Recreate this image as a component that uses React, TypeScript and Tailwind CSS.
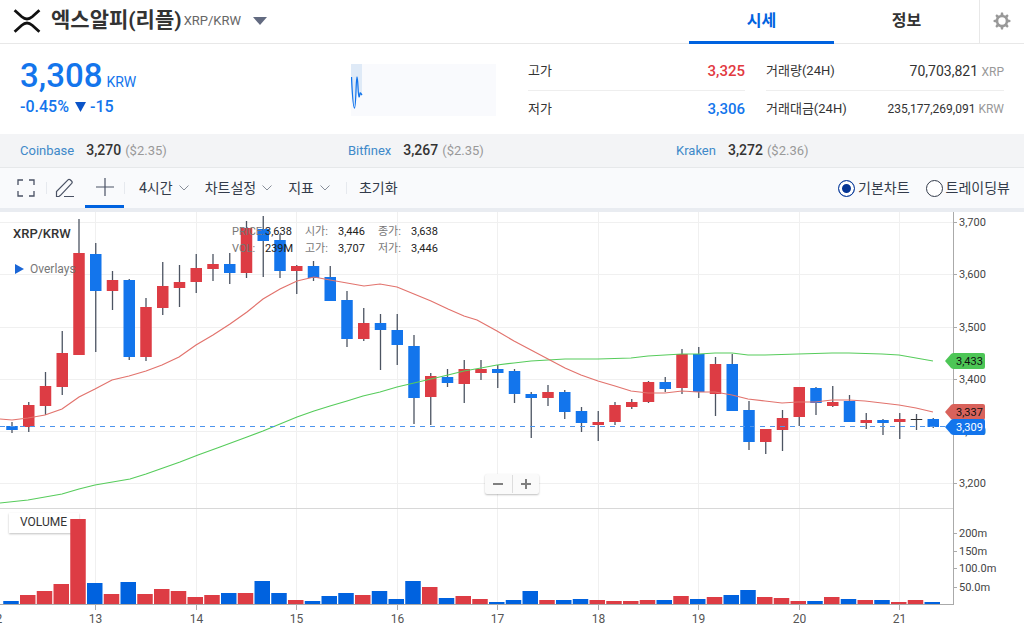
import { useState } from "react";
import { cx } from "class-variance-authority";

type Candle = {
  high: number;
  top: number;
  bottom: number;
  low: number;
  color: "r" | "b" | "k";
  volume: number;
};

const RED = "#dd3c44";
const BLUE = "#1375ec";
const FONT = "font-[Roboto,'Noto_Sans_CJK_KR',sans-serif]";

const row = (
  color: Candle["color"],
  high: number,
  top: number,
  bottom: number,
  low: number,
  volume: number
): Candle => ({ color, high, top, bottom, low, volume });

// One entry per 4 hours, in plot units
const CANDLES: Candle[] = [
  row("b", 422, 426, 430, 433, 3),
  row("r", 402, 405, 427, 432, 9),
  row("r", 372, 386, 406, 415, 13),
  row("r", 331, 353, 387, 395, 20),
  row("r", 219, 253, 355, 355, 85),
  row("b", 243, 254, 291, 352, 21),
  row("r", 271, 280, 291, 310, 10),
  row("b", 279, 280, 357, 360, 22),
  row("r", 298, 307, 357, 361, 10),
  row("r", 262, 286, 308, 315, 15),
  row("r", 265, 282, 288, 307, 13),
  row("r", 254, 268, 282, 293, 7),
  row("r", 254, 264, 269, 281, 9),
  row("b", 253, 264, 273, 284, 11),
  row("r", 221, 228, 273, 278, 11),
  row("b", 216, 229, 241, 277, 23),
  row("b", 234, 240, 271, 278, 11),
  row("r", 265, 266, 271, 294, 4),
  row("b", 261, 266, 278, 281, 3),
  row("b", 266, 277, 301, 301, 8),
  row("b", 291, 300, 339, 347, 11),
  row("r", 308, 323, 339, 341, 9),
  row("b", 314, 323, 330, 370, 13),
  row("b", 314, 330, 345, 365, 5),
  row("b", 335, 346, 398, 424, 23),
  row("r", 373, 376, 397, 425, 17),
  row("b", 369, 377, 383, 387, 6),
  row("r", 360, 369, 384, 403, 8),
  row("r", 360, 369, 373, 380, 5),
  row("b", 365, 369, 373, 388, 2),
  row("b", 369, 371, 394, 403, 4),
  row("b", 392, 394, 398, 438, 13),
  row("r", 385, 392, 398, 406, 4),
  row("b", 390, 392, 412, 419, 4),
  row("b", 407, 411, 423, 432, 5),
  row("r", 411, 422, 425, 441, 4),
  row("r", 402, 405, 422, 425, 3),
  row("r", 399, 402, 407, 409, 3),
  row("r", 381, 382, 402, 403, 4),
  row("b", 377, 382, 389, 392, 4),
  row("r", 349, 354, 388, 394, 8),
  row("b", 347, 354, 392, 398, 5),
  row("r", 357, 364, 394, 416, 7),
  row("b", 354, 364, 411, 411, 9),
  row("b", 401, 410, 442, 450, 14),
  row("r", 429, 429, 442, 454, 7),
  row("r", 410, 418, 430, 451, 6),
  row("r", 387, 387, 417, 426, 3),
  row("b", 387, 388, 403, 415, 3),
  row("r", 386, 402, 406, 407, 7),
  row("b", 395, 401, 422, 422, 5),
  row("r", 413, 420, 423, 429, 4),
  row("b", 419, 420, 423, 435, 4),
  row("r", 413, 419, 422, 439, 2),
  row("k", 414, 419, 420, 430, 4),
  row("b", 418, 419, 427, 428, 2),
];

const MA_SHORT =
  "0,419 12,420 28,418 45,415 62,409 79,397 95,389 112,380 129,376 146,371 162,365 179,357 196,345 213,335 230,324 247,312 263,299 280,289 297,281 314,277 330,280 347,283 364,286 380,284 397,287 414,294 431,301 448,309 464,316 477,320 497,331 514,341 531,350 548,359 565,368 581,375 598,381 615,386 631,391 648,393 665,393 682,391 698,392 715,392 732,395 748,399 765,401 782,403 798,402 815,402 832,400 849,400 865,401 882,403 899,405 916,408 933,412";
const MA_LONG =
  "0,503 28,500 62,494 79,489 95,485 130,479 146,474 163,468 180,462 198,455 220,447 247,437 263,431 280,424 297,417 314,411 330,406 347,401 363,396 380,392 397,387 414,383 431,379 448,375 464,371 481,368 497,365 514,363 531,361 548,360 565,359 598,359 631,358 648,356 682,354 699,354 715,353 732,353 748,355 765,355 798,354 832,353 849,353 882,354 899,355 916,358 933,361";

const PRICE_TICKS = [
  { label: "3,700", y: 222 },
  { label: "3,600", y: 274 },
  { label: "3,500", y: 327 },
  { label: "3,400", y: 379 },
  { label: "3,300", y: 431 },
  { label: "3,200", y: 483 },
];
const VOLUME_TICKS = [
  { label: "200m", y: 533 },
  { label: "150m", y: 551 },
  { label: "100.0m", y: 568 },
  { label: "50.0m", y: 587 },
];
const DAYS = [12, 13, 14, 15, 16, 17, 18, 19, 20, 21];

const EXCHANGES = [
  { name: "Coinbase", price: "3,270", usd: "($2.35)" },
  { name: "Bitfinex", price: "3,267", usd: "($2.35)" },
  { name: "Kraken", price: "3,272", usd: "($2.36)" },
];

const candleX = (i: number) => 12 + i * 16.75;
const dayX = (day: number) => Math.round(96 + (day - 13) * 100.5) - 0.5;

const XrpLogo = () => (
  <svg viewBox="0 0 28 24" className="h-6 w-7" fill="none" stroke="#111" strokeWidth="2.8">
    <path d="M1.6 1.2 8.8 7.8Q14 12.2 19.2 7.8L26.4 1.2" />
    <path d="M1.6 22.8 8.8 16.2Q14 11.8 19.2 16.2L26.4 22.8" />
  </svg>
);

const GearIcon = () => (
  <svg viewBox="0 0 18 18" className="size-[18px]" fill="none" stroke="#999">
    <circle cx="9" cy="9" r="5" strokeWidth="2.6" />
    {[0, 45, 90, 135, 180, 225, 270, 315].map((angle) => (
      <path
        key={angle}
        d="M7.4 3.4 8 .6h2l.6 2.8z"
        fill="#999"
        stroke="none"
        transform={`rotate(${angle} 9 9)`}
      />
    ))}
  </svg>
);

const Caret = () => (
  <svg viewBox="0 0 10 6" className="h-1.5 w-2.5" fill="none" stroke="#888e99">
    <path d="M.5.5 5 5 9.5.5" />
  </svg>
);

const Divider = () => <span className="h-3 w-px bg-[#e6e9ee]" />;

const Header = () => {
  const [tab, setTab] = useState("시세");

  return (
    <header className="flex h-11 border-b border-[#e8e8e8]">
      <div className="flex flex-1 items-center pb-0.5 pl-[13px]">
        <XrpLogo />
        <h1 className="ml-2.5 text-[21px] font-bold text-[#333]">엑스알피(리플)</h1>
        <span className="ml-0.5 text-[13px] text-[#666]">XRP/KRW</span>
        <button type="button" aria-label="코인 선택" className="ml-3">
          <svg viewBox="0 0 14 8" className="h-2 w-3.5" fill="#626a80">
            <path d="M0 0h14L7 8z" />
          </svg>
        </button>
      </div>
      <nav className="flex">
        {["시세", "정보"].map((name) => (
          <button
            key={name}
            type="button"
            onClick={() => setTab(name)}
            className={cx(
              "h-11 w-[145px] border-b-3 text-[16px] font-bold",
              tab === name
                ? "border-[#0062df] text-[#0062df]"
                : "border-transparent text-[#333]"
            )}
          >
            {name}
          </button>
        ))}
      </nav>
      <button
        type="button"
        aria-label="설정"
        className="flex w-[45px] items-center justify-center border-l border-[#e8e8e8] pb-0.5"
      >
        <GearIcon />
      </button>
    </header>
  );
};

const Summary = () => (
  <section className="flex h-[90px] items-start px-5">
    <div className="flex-1 pt-3 font-medium text-[#1375ec]">
      <p className="flex h-10 items-baseline gap-1 leading-10">
        <strong className="text-[33px] font-medium">3,308</strong>
        <span className="text-[14px] font-normal">KRW</span>
      </p>
      <p className="flex items-center gap-1.5 text-[16px] leading-[22px]">
        -0.45%
        <svg viewBox="0 0 11 10" className="h-2.5 w-[11px]" fill="#0b54c8">
          <path d="M0 0h11L5.500 10z" />
        </svg>
        <span className="-ml-0.5">-15</span>
      </p>
    </div>
    <div className="mt-5 w-[145px] bg-[#f9fafd]">
      <svg viewBox="0 0 145 52" className="h-[52px] w-full" fill="none">
        <path d="M0 0h11v32l-2-3-2 5-1-21-2 20-1 11-2-11-1-20z" fill="#dfeaf7" />
        <path
          d="M.5 13C1 24 2 44 3.500 44S5 13 6 13s1 20 2 20 .6-5 1.500-4l1.500 2"
          stroke="#1375ec"
          strokeWidth="1.300"
        />
      </svg>
    </div>
    <dl className="ml-8 mt-2 w-[217px] text-[13px] text-[#333]">
      <div className="flex h-[39px] items-center justify-between border-b border-[#eee]">
        <dt>고가</dt>
        <dd className="text-[15px] font-medium text-[#e2393f]">3,325</dd>
      </div>
      <div className="flex h-9 items-center justify-between">
        <dt>저가</dt>
        <dd className="text-[15px] font-medium text-[#1375ec]">3,306</dd>
      </div>
    </dl>
    <dl className="ml-[21px] mt-2 w-[238px] text-[13px] text-[#333]">
      <div className="flex h-[39px] items-center justify-between border-b border-[#eee]">
        <dt>거래량(24H)</dt>
        <dd className="text-[14px]">
          70,703,821 <span className="text-[12px] text-[#999]">XRP</span>
        </dd>
      </div>
      <div className="flex h-9 items-center justify-between">
        <dt>거래대금(24H)</dt>
        <dd className="text-[12px]">
          235,177,269,091 <span className="text-[#999]">KRW</span>
        </dd>
      </div>
    </dl>
  </section>
);

const Toolbar = () => {
  const [chart, setChart] = useState("기본차트");

  return (
    <div className="flex h-11 items-start justify-between border-b-4 border-[#e9ecf1] bg-[#f9fafc] text-[14px] text-[#333b4a]">
      <div className="flex h-10 items-center">
        <button
          type="button"
          aria-label="전체화면"
          className="flex h-10 w-[46px] items-center justify-end pr-[11px]"
        >
          <svg viewBox="0 0 18 18" className="size-[18px]" fill="none" stroke="#4a5264" strokeWidth="1.300">
            <path d="M1 6V1h5M12 1h5v5M17 12v5h-5M6 17H1v-5" />
          </svg>
        </button>
        <Divider />
        <button type="button" aria-label="그리기" className="flex h-10 w-[38px] items-center justify-center pr-0.5">
          <svg viewBox="0 0 20 20" className="size-5" fill="none" stroke="#4a5264" strokeWidth="1.200">
            <path d="M1.500 18.500v-5L13 1.800q1-1 2.200 0l1.500 1.400q1 1 0 2.200L5.500 17.300 4 18.500zM9 18.500h10" />
          </svg>
        </button>
        <button
          type="button"
          aria-label="십자선"
          className="flex h-10 w-[39px] items-center justify-center border-b-3 border-[#0062df]"
        >
          <svg viewBox="0 0 18 18" className="size-[18px]" fill="none" stroke="#4a5264" strokeWidth="1.200">
            <path d="M9 0v18M0 9h18" />
          </svg>
        </button>
        <Divider />
        <div className="ml-3.5 flex items-center gap-4">
          {["4시간", "차트설정", "지표"].map((name) => (
            <button key={name} type="button" aria-haspopup="menu" className="flex items-center gap-1.5">
              {name}
              <Caret />
            </button>
          ))}
          <Divider />
        </div>
        <button type="button" className="ml-3">
          초기화
        </button>
      </div>
      <fieldset className="flex h-10 items-center gap-4 pr-3.5">
        {["기본차트", "트레이딩뷰"].map((name) => (
          <label key={name} className="flex items-center gap-[3px]">
            <input
              type="radio"
              name="chart"
              checked={chart === name}
              onChange={() => setChart(name)}
              className="size-[17px] appearance-none rounded-full border border-[#333b4a] bg-white checked:border-[#12429f] checked:bg-[#063695] checked:shadow-[inset_0_0_0_3px_white]"
            />
            {name}
          </label>
        ))}
      </fieldset>
    </div>
  );
};

type PriceTagProps = { y: number; label: string; fill: string; color: string };

const PriceTag = ({ y, label, fill, color }: PriceTagProps) => (
  <g transform={`translate(945 ${y})`}>
    <path d="M0 0 6-7q1-1 3-1h29q2 0 2 2V6q0 2-2 2H9Q7 8 6 7z" fill={fill} />
    <text x="11" y="4" fontSize="11" fill={color}>
      {label}
    </text>
  </g>
);

const Plot = () => (
  <svg viewBox="0 212 1024 419" className={cx("relative block h-auto w-full", FONT)}>
    <g stroke="#f0f0f0">
      {DAYS.map((day) => (
        <path key={day} d={`M${dayX(day)} 212V604`} />
      ))}
      {PRICE_TICKS.map(({ y }) => (
        <path key={y} d={`M0 ${y + 0.5}H953`} />
      ))}
    </g>
    <path d="M0 508.500H953" stroke="#d8d8d8" />

    {CANDLES.map((c, i) => {
      const x = candleX(i);
      const isUp = c.color !== "b";
      return (
        <g key={i}>
          <path d={`M${x} ${c.high}V${c.low}`} stroke="#4c5462" strokeWidth="1.300" />
          <rect
            x={x - 5.75}
            y={c.top}
            width="11.500"
            height={c.bottom - c.top}
            fill={c.color === "k" ? "#333" : isUp ? RED : BLUE}
          />
          <rect
            x={x - 8.75}
            y={604 - c.volume}
            width="15.500"
            height={c.volume}
            fill={isUp ? RED : "#0062df"}
          />
        </g>
      );
    })}

    <polyline points={MA_LONG} fill="none" stroke="#57cc5c" strokeWidth="1.200" />
    <polyline points={MA_SHORT} fill="none" stroke="#e2736d" strokeWidth="1.200" />
    <path d="M0 426.500H945" stroke="#4d94ec" strokeDasharray="5 5" />

    {/* Axes */}
    <path d="M953.500 212V605M0 604.500H953" stroke="#aaa" fill="none" />
    {[...PRICE_TICKS, ...VOLUME_TICKS].map(({ label, y }) => (
      <g key={label}>
        <path d={`M953 ${y + 0.5}h4`} stroke="#aaa" />
        <text x="959" y={y + 4} fontSize="11" fill="#444">
          {label}
        </text>
      </g>
    ))}
    {DAYS.map((day) => (
      <g key={day}>
        <path d={`M${dayX(day)} 605v5`} stroke="#aaa" />
        <text x={dayX(day)} y="623" fontSize="12" fill="#555" textAnchor="middle">
          {day}
        </text>
      </g>
    ))}

    <PriceTag y={361} label="3,433" fill="#4dc656" color="#111" />
    <PriceTag y={412} label="3,337" fill="#d9625b" color="#111" />
    <PriceTag y={427} label="3,309" fill={BLUE} color="#fff" />
  </svg>
);

const LEGEND = [
  ["PRICE:", "3,638", "시가:", "3,446", "종가:", "3,638"],
  ["VOL:", "239M", "고가:", "3,707", "저가:", "3,446"],
];

const Chart = () => (
  <section className="relative">
    <span className="absolute left-[9px] top-[301px] h-5 w-[70px] pl-[11px] text-[12px] leading-[18px] text-[#333] shadow-[0_1px_2px_rgba(0,0,0,0.25)]">
      VOLUME
    </span>
    <Plot />
    <h2 className="absolute left-[13px] top-3 text-[13px] font-medium text-[#333]">XRP/KRW</h2>
    <button
      type="button"
      className="absolute left-[15px] top-12 flex items-center gap-1.5 text-[12px] text-[#777]"
    >
      <svg viewBox="0 0 9 10" className="h-2.5 w-[9px]" fill="#1a66d6">
        <path d="M0 0 9 5 0 10z" />
      </svg>
      Overlays
    </button>
    <div className="absolute left-[232px] top-3 text-[11px]">
      {LEGEND.map((cells) => (
        <div key={cells[0]} className="grid h-[17px] grid-cols-[33px_40px_33px_40px_33px_40px] items-center">
          {cells.map((cell, i) => (
            <span key={i} className={i % 2 ? "text-[#222]" : "text-[#777]"}>
              {cell}
            </span>
          ))}
        </div>
      ))}
    </div>
    <div className="absolute left-1/2 top-[262px] flex h-5 w-[54px] -translate-x-1/2 items-center divide-x divide-[#ddd] rounded-xs bg-[#fafafa] shadow-[0_1px_2px_rgba(0,0,0,0.25)]">
      <button type="button" aria-label="축소" className="flex flex-1 justify-center py-1">
        <svg viewBox="0 0 10 10" className="size-2.5" stroke="#808080" strokeWidth="2">
          <path d="M0 5h10" />
        </svg>
      </button>
      <button type="button" aria-label="확대" className="flex flex-1 justify-center py-1">
        <svg viewBox="0 0 10 10" className="size-2.5" stroke="#808080" strokeWidth="2">
          <path d="M0 5h10M5 0v10" />
        </svg>
      </button>
    </div>
  </section>
);

const App = () => (
  <main className={cx("overflow-hidden bg-white", FONT)}>
    <Header />
    <Summary />
    <ul className="grid h-[34px] grid-cols-3 items-center border-b border-[#e6e8ea] bg-[#f3f4f6] px-5 text-[14px]">
      {EXCHANGES.map(({ name, price, usd }) => (
        <li key={name} className="flex items-center">
          <a href="#" className="text-[13px] text-[#4089c9]">
            {name}
          </a>
          <strong className="ml-3 font-medium text-[#333]">{price}</strong>
          <span className="ml-1 text-[13px] text-[#999]">{usd}</span>
        </li>
      ))}
    </ul>
    <Toolbar />
    <Chart />
  </main>
);

export default App;
